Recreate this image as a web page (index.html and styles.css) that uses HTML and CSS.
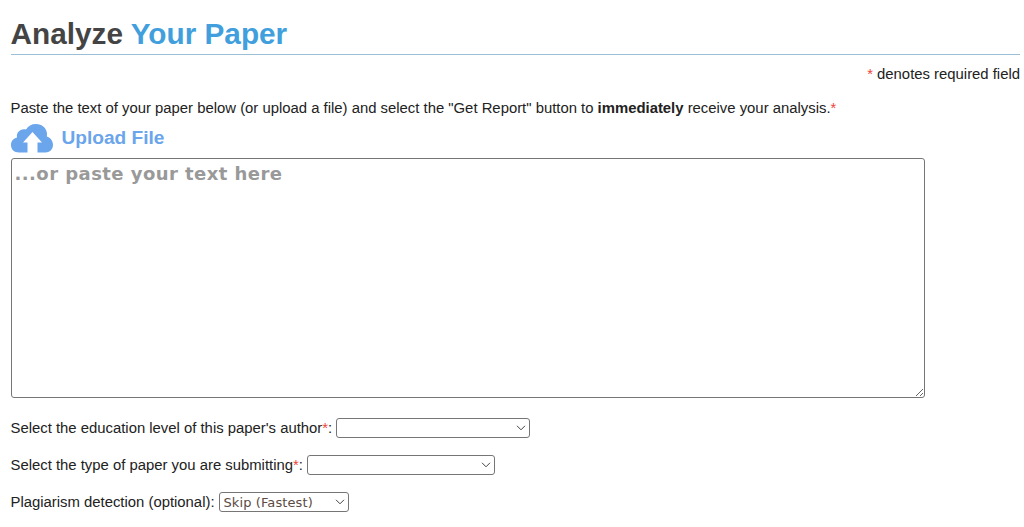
FILE: index.html
```html
<!DOCTYPE html>
<html lang="en">
<head>
  <meta charset="UTF-8">
  <title>Analyze Your Paper</title>
  <link rel="stylesheet" href="styles.css">
</head>
<body>

<h1>Analyze <span>Your Paper</span></h1>
<p class="note"><span class="required">*</span> denotes required field</p>

<form id="paperForm">
  <label class="intro" for="paperText">Paste the text of your paper below (or upload a file) and select the "Get Report" button to <b>immediately</b> receive your analysis.<span class="required">*</span></label>

  <a class="upload" href="#">
    <svg class="cloud" viewBox="0 0 42 29" aria-hidden="true">
      <path d="M8 28.500C3 28.500 0 25.500 0 21C0 17 2.500 14.300 6 13.500C5 8 10 4 15 5.500C17 2 20.500 0 25 0C31 0 35.500 4 36 9.500C36 10.500 36 11.500 35.800 12.500C39.500 13.500 42 17 42 21C42 25.500 38.500 28.500 34.500 28.500H26.500V18.500H31L21.500 8L12 18.500H16.500V28.500Z"/>
    </svg>
    Upload File
  </a>

  <textarea id="paperText" placeholder="...or paste your text here"></textarea>

  <div class="field">
    <label for="level">Select the education level of this paper's author<span class="required">*</span>:</label>
    <div class="select level">
      <select id="level">
        <option value=""></option>
      </select>
      <svg class="arrow" viewBox="0 0 9 6" aria-hidden="true"><path d="M0.500 0.800L4.500 4.800L8.500 0.800"/></svg>
    </div>
  </div>

  <div class="field">
    <label for="type">Select the type of paper you are submitting<span class="required">*</span>:</label>
    <div class="select type">
      <select id="type">
        <option value=""></option>
      </select>
      <svg class="arrow" viewBox="0 0 9 6" aria-hidden="true"><path d="M0.500 0.800L4.500 4.800L8.500 0.800"/></svg>
    </div>
  </div>

  <div class="field">
    <label for="plagiarism">Plagiarism detection (optional):</label>
    <div class="select plagiarism">
      <select id="plagiarism">
        <option value="skip">Skip (Fastest)</option>
      </select>
      <svg class="arrow" viewBox="0 0 9 6" aria-hidden="true"><path d="M0.500 0.800L4.500 4.800L8.500 0.800"/></svg>
    </div>
  </div>
</form>

</body>
</html>
```

FILE: styles.css
```css
body {
  font-family: "Liberation Sans", Arial, sans-serif;
  font-size: 14.87px;
  line-height: 18px;
  color: #222;
  background: #fff;
  margin: 0;
  padding: 14px 4px 0 10.500px;
  overflow: hidden;
}

h1 {
  margin: 0;
  font-size: 29.75px;
  line-height: 40px;
  color: #444;
  border-bottom: 1px solid #9bbfd6;
}

h1 span {
  color: #429fdd;
}

.required {
  color: #f0453a;
}

.note {
  margin: 10px 0 16px;
  text-align: right;
}

.intro {
  display: block;
}

.upload {
  display: flex;
  align-items: center;
  gap: 9px;
  height: 41px;
  color: #6ba5ec;
  font-size: 19.1px;
  font-weight: bold;
  text-decoration: none;
}

.cloud {
  width: 42px;
  height: 29px;
  margin-top: 1px;
  fill: #6ba5ec;
}

textarea {
  display: block;
  box-sizing: border-box;
  width: 914px;
  height: 240px;
  margin: 0 0 20px;
  padding: 2px 3px;
  border: 1px solid #767676;
  border-radius: 3px;
  font: bold 18px/26px Verdana, "DejaVu Sans", sans-serif;
  letter-spacing: 0.45px;
}

textarea::placeholder {
  color: #999;
  opacity: 1;
}

.field {
  display: flex;
  align-items: center;
  gap: 4px;
  height: 20px;
  margin-bottom: 17px;
}

.select {
  position: relative;
  height: 20px;
}

select {
  display: block;
  box-sizing: border-box;
  width: 100%;
  height: 20px;
  padding: 0 4px;
  border: 1px solid #767676;
  border-radius: 3px;
  background: #fff;
  color: #5b4b43;
  font: 13px Verdana, "DejaVu Sans", sans-serif;
  letter-spacing: 0.1px;
  appearance: none;
}

.arrow {
  position: absolute;
  right: 4px;
  top: 7px;
  width: 10px;
  height: 6px;
  fill: none;
  stroke: #444;
  pointer-events: none;
}

.level {
  width: 194px;
}

.type {
  width: 188px;
}

.plagiarism {
  width: 130px;
}
```
